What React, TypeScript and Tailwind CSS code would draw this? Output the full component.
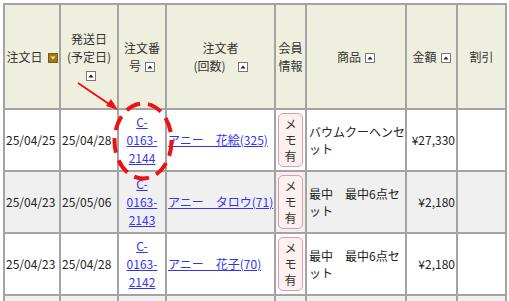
import React from "react";

const SortUp = () => (
  <span className="inline-block align-middle w-[10px] h-[10px] border border-[#777] bg-white relative ml-[4px] box-border">
    <svg width="8" height="8" viewBox="0 0 8 8" className="absolute left-0 top-0">
      <polygon points="1.5,5.5 6.5,5.5 4,2.5" fill="#222" />
    </svg>
  </span>
);

const SortDownActive = () => (
  <span className="inline-block align-middle w-[10px] h-[10px] bg-[#a27a1c] border border-[#7d5b10] relative ml-[5px] box-border">
    <svg width="8" height="8" viewBox="0 0 8 8" className="absolute left-0 top-0">
      <polygon points="1.5,2.5 6.5,2.5 4,5.5" fill="#f3e6b8" />
    </svg>
  </span>
);

const Memo = () => (
  <div className="mx-auto w-[25px] border border-[#e39aab] bg-[#fdf1ef] rounded-[5px] flex flex-col items-center py-[2px] leading-[16px] text-[12px] text-[#333]">
    <span>メ</span>
    <span>モ</span>
    <span>有</span>
  </div>
);

const rows = [
  { d1: "25/04/25", d2: "25/04/28", no: ["C-", "0163-", "2144"], name: "アニー　花絵(325)", prod: ["バウムクーヘンセ", "ット"], amt: "¥27,330", bg: "bg-white" },
  { d1: "25/04/23", d2: "25/05/06", no: ["C-", "0163-", "2143"], name: "アニー　タロウ(71)", prod: ["最中　最中6点セ", "ット"], amt: "¥2,180", bg: "bg-[#f0f0f0]" },
  { d1: "25/04/23", d2: "25/04/28", no: ["C-", "0163-", "2142"], name: "アニー　花子(70)", prod: ["最中　最中6点セ", "ット"], amt: "¥2,180", bg: "bg-white" },
];

const td = "border-2 border-[#a3a3a3] p-0 align-middle";

export default function App() {
  return (
    <div className="relative w-[509px] h-[301px] overflow-hidden bg-white text-[12px] text-[#222]" style={{ fontFamily: '"Noto Sans CJK JP", "Noto Sans", sans-serif' }}>
      <div className="pt-[3px] pl-[3px]">
        <table className="table-fixed border-collapse w-[502px]">
          <colgroup>
            <col className="w-[56px]" />
            <col className="w-[58px]" />
            <col className="w-[48px]" />
            <col className="w-[109px]" />
            <col className="w-[31px]" />
            <col className="w-[100px]" />
            <col className="w-[51px]" />
            <col className="w-[49px]" />
          </colgroup>
          <thead>
            <tr className="h-[105px] bg-[#efefdf] text-[#333] leading-[18px]">
              <th className={`${td} font-normal text-center`}>
                <span className="whitespace-nowrap">注文日<SortDownActive /></span>
              </th>
              <th className={`${td} font-normal text-center`}>
                <div>発送日</div>
                <div>(予定日)</div>
                <div><SortUp /></div>
              </th>
              <th className={`${td} font-normal text-center`}>
                <div>注文番</div>
                <div>号<SortUp /></div>
              </th>
              <th className={`${td} font-normal text-center`}>
                <div>注文者</div>
                <div>(回数)<span className="ml-[8px]"><SortUp /></span></div>
              </th>
              <th className={`${td} font-normal text-center`}>
                <div>会員</div>
                <div>情報</div>
              </th>
              <th className={`${td} font-normal text-center`}>
                <span>商品<SortUp /></span>
              </th>
              <th className={`${td} font-normal text-center`}>
                <span>金額<SortUp /></span>
              </th>
              <th className={`${td} font-normal text-center`}>割引</th>
            </tr>
          </thead>
          <tbody>
            {rows.map((r, i) => (
              <tr key={i} className={`h-[62px] ${r.bg}`}>
                <td className={`${td} pl-[1px] whitespace-nowrap`}>{r.d1}</td>
                <td className={`${td} pl-[1px] whitespace-nowrap`}>{r.d2}</td>
                <td className={`${td} text-center leading-[18px]`}>
                  {r.no.map((n, j) => (
                    <div key={j}>
                      <a className="text-[#3434f5] underline">{n}</a>
                    </div>
                  ))}
                </td>
                <td className={`${td} pl-[1px] whitespace-nowrap`}>
                  <a className="text-[#3434f5] underline">{r.name}</a>
                </td>
                <td className={`${td}`}>
                  <Memo />
                </td>
                <td className={`${td} pl-[2px] leading-[17px]`}>
                  {r.prod.map((p, j) => (
                    <div key={j} className="whitespace-nowrap">{p}</div>
                  ))}
                </td>
                <td className={`${td} text-right pr-[1px] whitespace-nowrap`}>{r.amt}</td>
                <td className={`${td}`}></td>
              </tr>
            ))}
            <tr className="h-[62px] bg-[#f0f0f0]">
              {Array.from({ length: 8 }).map((_, k) => (
                <td key={k} className={td}></td>
              ))}
            </tr>
          </tbody>
        </table>
      </div>
      <svg className="absolute left-0 top-0 pointer-events-none" width="509" height="301" viewBox="0 0 509 301">
        <ellipse cx="143" cy="141" rx="28.5" ry="37.5" fill="none" stroke="#ee1111" strokeWidth="4" strokeDasharray="15 8" />
        <line x1="78" y1="83" x2="112" y2="106" stroke="#ee1111" strokeWidth="2" />
        <polygon points="118,110 106,106 111,99" fill="#ee1111" />
      </svg>
    </div>
  );
}
